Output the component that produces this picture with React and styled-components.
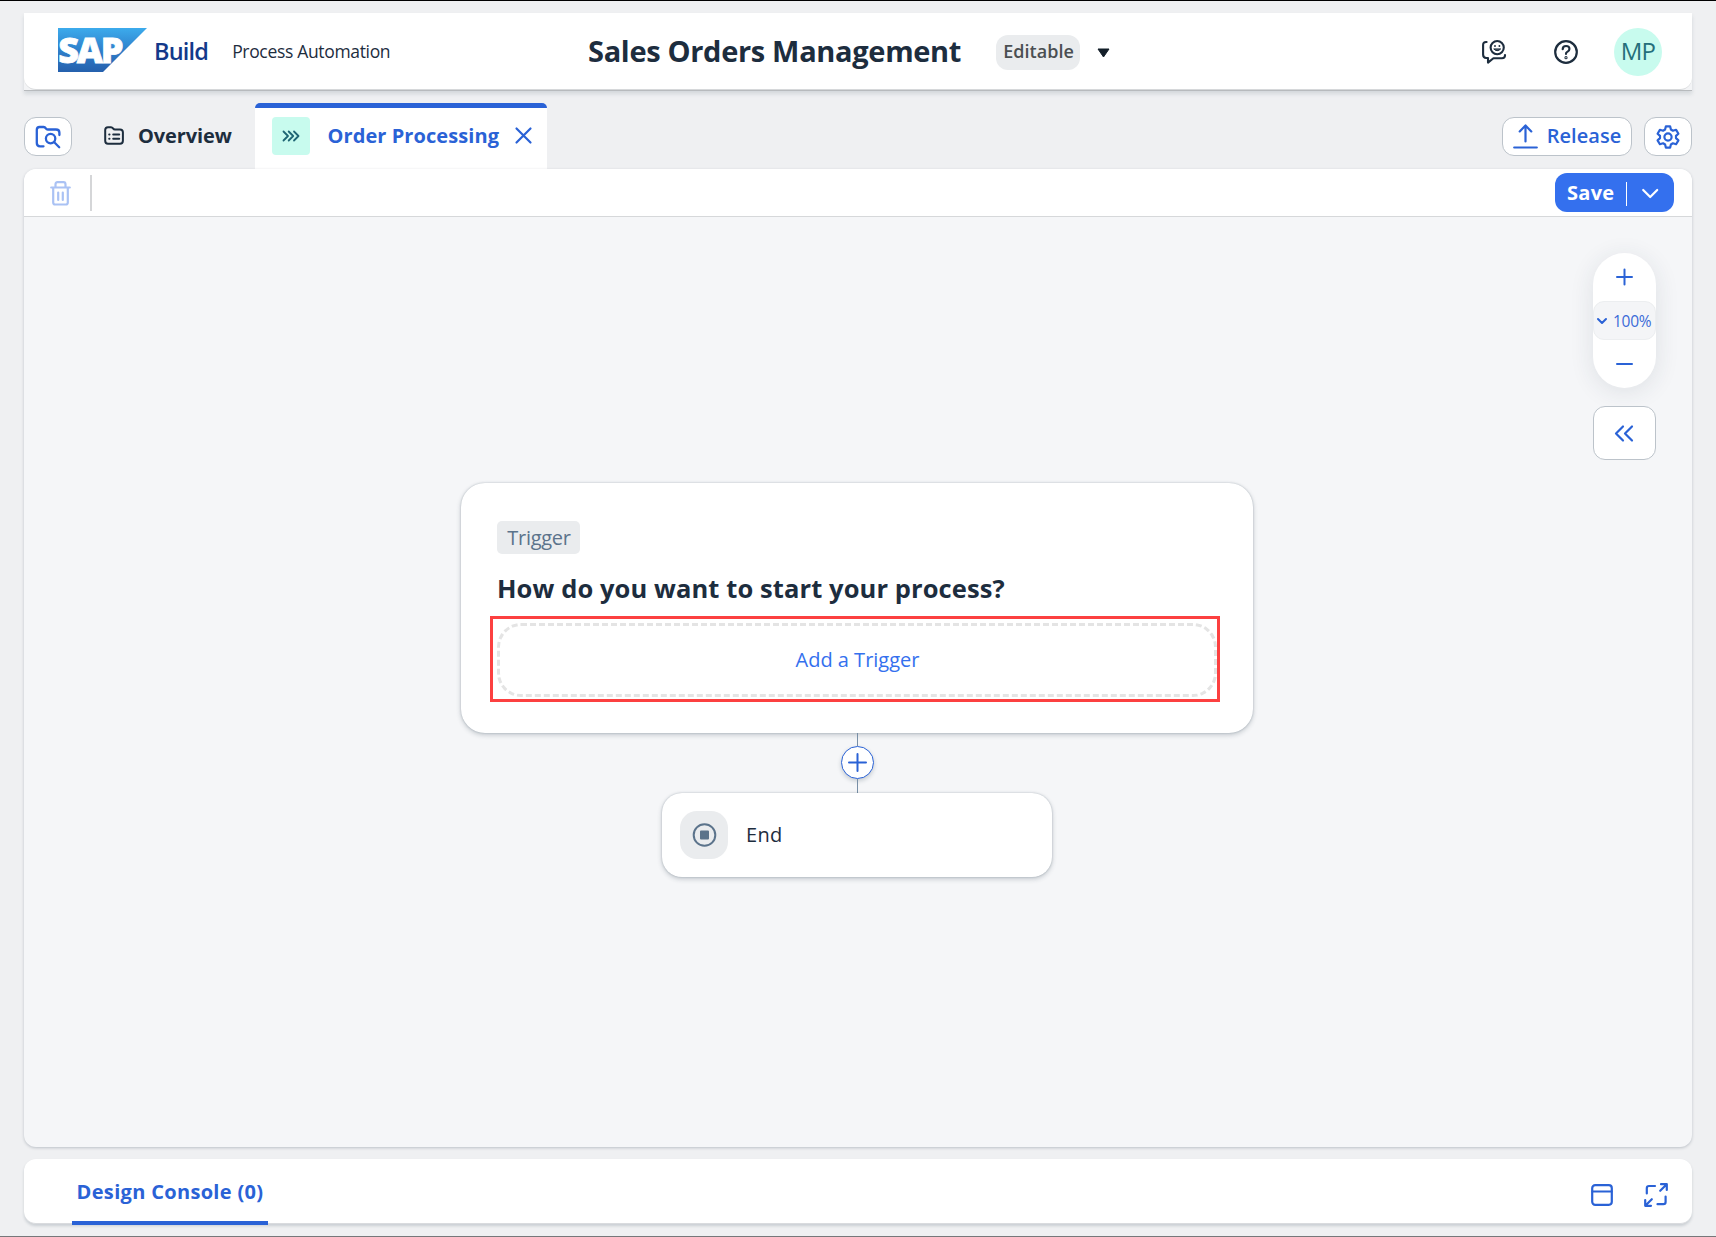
import React from "react";
import styled, { createGlobalStyle } from "styled-components";

const blue = "#2a62d6";
const ink = "#1d2d3e";

const Global = createGlobalStyle`
  * { box-sizing: border-box; }
  html, body { margin: 0; padding: 0; }
  body { background: #eff0f2; font-family: "Open Sans", "Noto Sans", sans-serif; color: ${ink}; }
  button { font: inherit; color: inherit; border: 0; background: none; padding: 0; margin: 0; }
  h1 { margin: 0; }
  svg { display: block; flex: none; overflow: visible; }
`;

const Page = styled.div`
  width: 1716px;
  height: 1237px;
  padding: 12px 24px 0;
  display: flex;
  flex-direction: column;
  border-top: 1px solid #000;
  border-bottom: 1px solid #76777a;
  overflow: hidden;
`;

const Label = styled.span`
  font-size: ${(p) => p.$size || 20}px;
  font-weight: ${(p) => p.$weight || 400};
  letter-spacing: ${(p) => p.$track || 0}px;
  color: ${(p) => p.$color || "inherit"};
  line-height: 24px;
  white-space: nowrap;
`;

const HeaderFrame = styled.header`
  flex: none;
  height: 78px;
  background: #f3f4f6;
  border-bottom: 1px solid #b7babd;
  box-shadow: 0 3px 4px rgba(34, 53, 72, 0.13);
`;
const Header = styled.div`
  height: 77px;
  background: #fff;
  border-radius: 0 0 12px 12px;
  border-bottom: 1px solid #d6d8da;
  display: grid;
  grid-template-columns: 564px 1fr auto;
  align-items: center;
`;
const Brand = styled.div`
  display: flex;
  align-items: center;
  padding: 0 0 3px 34px;
`;
const Product = styled(Label)`
  margin: 2px 0 0 6px;
`;
const Suite = styled(Label)`
  margin: 2px 0 0 24px;
`;
const ProjectName = styled.div`
  display: flex;
  align-items: center;
  padding-bottom: 1px;
`;
const Badge = styled.span`
  height: 35px;
  width: 84px;
  margin: 3px 18px 0 35px;
  padding: 0 0 3px 1px;
  border-radius: 12px;
  background: #eaecee;
  display: flex;
  align-items: center;
  justify-content: center;
`;
const BadgeArrow = styled.svg`
  margin: 4px 0 0 -1px;
`;
const HeaderTools = styled.div`
  display: flex;
  align-items: center;
  padding: 2px 30px 0 0;
`;
const HeaderButton = styled.button`
  margin-right: ${(p) => p.$gap}px;
`;
const Avatar = styled.span`
  width: 48px;
  height: 48px;
  border-radius: 50%;
  background: #c8fbee;
  display: flex;
  align-items: center;
  justify-content: center;
  padding-bottom: 2px;
`;

const TabRow = styled.nav`
  flex: none;
  height: 78px;
  padding-top: 12px;
  display: flex;
  align-items: stretch;
`;
const OutlineButton = styled.button`
  width: ${(p) => p.$width}px;
  height: 39px;
  margin: 14px ${(p) => p.$gap || 0}px 0 0;
  border: 1px solid #bcc3ca;
  border-radius: 12px;
  background: #fff;
  color: ${blue};
  display: flex;
  align-items: center;
  justify-content: center;
`;
const Tab = styled.div`
  width: ${(p) => p.$width}px;
  display: flex;
  align-items: center;
  padding: 0 0 6px ${(p) => (p.$active ? 17 : 32)}px;
  border-top: 5px solid ${(p) => (p.$active ? blue : "transparent")};
  border-radius: 5px 5px 0 0;
  background: ${(p) => (p.$active ? "#fff" : "transparent")};
  color: ${(p) => (p.$active ? blue : ink)};
`;
const TabText = styled(Label)`
  margin: 0 ${(p) => p.$right || 0}px 0 ${(p) => p.$left}px;
`;
const TabTile = styled.span`
  width: 38px;
  height: 38px;
  border-radius: 4px;
  background: #c8fbee;
  display: flex;
  align-items: center;
  justify-content: center;
`;
const ButtonText = styled(Label)`
  margin: 0 0 1px 9px;
`;
const Spacer = styled.span`
  flex: 1;
`;

const Panel = styled.main`
  flex: none;
  height: 978px;
  border-radius: 12px;
  background: #f5f6f8;
  box-shadow: 0 1px 3px rgba(34, 53, 72, 0.25);
  position: relative;
  display: flex;
  flex-direction: column;
`;
const Toolbar = styled.div`
  flex: none;
  height: 48px;
  border-radius: 12px 12px 0 0;
  background: #fff;
  border-bottom: 1px solid #d6d8da;
  padding: 1px 18px 0 26px;
  display: flex;
  align-items: center;
`;
const Divider = styled.span`
  width: 2px;
  height: 36px;
  margin-left: 19px;
  background: #d5d6d8;
`;
const SaveButton = styled.button`
  width: 119px;
  height: 39px;
  margin-bottom: 1px;
  border-radius: 12px;
  background: #3470ee;
  color: #fff;
  display: flex;
  align-items: center;
  padding: 1px 0 0 11px;
`;
const SaveRule = styled.span`
  width: 1px;
  height: 24px;
  margin: 1px 15px 0 11px;
  background: #fff;
`;
const SaveText = styled(Label)`
  padding-left: 1px;
  width: 49px;
  text-align: left;
`;

const Flow = styled.section`
  flex: 1;
  padding: 266px 2px 0 0;
  display: flex;
  flex-direction: column;
  align-items: center;
`;
const nodeShadow = "0 0 2px rgba(34,53,72,.28), 0 2px 5px rgba(34,53,72,.24)";
const TriggerCard = styled.article`
  width: 792px;
  height: 250px;
  border-radius: 24px;
  background: #fff;
  box-shadow: ${nodeShadow};
  padding: 38px 36px 0 36px;
  display: flex;
  flex-direction: column;
`;
const Chip = styled.span`
  width: 83px;
  height: 33px;
  border-radius: 5px;
  background: #eaecee;
  display: flex;
  align-items: center;
  justify-content: center;
  padding-left: 1px;
`;
const Question = styled.h2`
  margin: 16px 0 0;
  font-size: 25.5px;
  font-weight: 700;
  letter-spacing: 0.1px;
  line-height: 36px;
  height: 53px;
  white-space: nowrap;
`;
const DropZone = styled.div`
  position: relative;
  width: 720px;
  height: 74px;
  border: 3px dashed #e4e4e4;
  border-radius: 24px;
  display: flex;
  align-items: center;
  justify-content: center;
  padding: 0 0 1px 1px;
`;
const Highlight = styled.div`
  position: absolute;
  top: -10px;
  left: -10px;
  width: 730px;
  height: 86px;
  border: 3px solid #fc4040;
`;
const Connector = styled.div`
  height: 60px;
  display: flex;
  flex-direction: column;
  align-items: center;
`;
const Wire = styled.span`
  width: 1px;
  height: ${(p) => p.$length}px;
  background: #788fa6;
`;
const AddStep = styled.button`
  width: 33px;
  height: 33px;
  border: 1px solid ${blue};
  border-radius: 50%;
  background: #fff;
  box-shadow: 0 2px 4px rgba(34, 53, 72, 0.22);
  display: flex;
  align-items: center;
  justify-content: center;
`;
const EndCard = styled.article`
  width: 390px;
  height: 84px;
  border-radius: 20px;
  background: #fff;
  box-shadow: ${nodeShadow};
  padding: 0 18px;
  display: flex;
  align-items: center;
  gap: 18px;
`;
const EndTile = styled.span`
  width: 48px;
  height: 48px;
  border-radius: 17px;
  background: #eaecee;
  display: flex;
  align-items: center;
  justify-content: center;
`;

const CanvasTools = styled.aside`
  position: absolute;
  top: 84px;
  right: 36px;
  width: 63px;
  display: flex;
  flex-direction: column;
  gap: 18px;
`;
const ZoomPill = styled.div`
  height: 135px;
  border-radius: 32px;
  background: #fff;
  box-shadow: 0 4px 24px rgba(34, 53, 72, 0.11);
  display: grid;
  grid-template-rows: 48px 39px 48px;
`;
const ZoomStep = styled.button`
  display: flex;
  align-items: center;
  justify-content: center;
`;
const ZoomLevel = styled.button`
  border-radius: 11px;
  border: 1px solid #eceef0;
  background: #f4f5f7;
  display: flex;
  align-items: center;
  padding: 0 0 0 2px;
  gap: 5px;
`;
const CollapseButton = styled.button`
  height: 54px;
  border: 1px solid #bcc3ca;
  border-radius: 12px;
  background: #fff;
  display: flex;
  align-items: center;
  justify-content: center;
  padding-right: 1px;
`;

const Console = styled.footer`
  flex: none;
  height: 65px;
  margin-top: 12px;
  border-radius: 12px;
  background: #fff;
  border-bottom: 1px solid #d9dbde;
  box-shadow: 0 2px 3px rgba(34, 53, 72, 0.18);
  padding: 0 24px 0 48px;
  display: flex;
  align-items: center;
`;
const ConsoleTab = styled.div`
  width: 196px;
  height: 66px;
  margin-bottom: -2px;
  border-bottom: 4px solid ${blue};
  display: flex;
  justify-content: center;
  padding-top: 21px;
`;
const ConsoleTools = styled.div`
  margin-left: auto;
  display: flex;
  align-items: center;
  gap: 31px;
  padding-top: 7px;
`;

const Icon = ({ w, h = w, sw = 2, color = "currentColor", children }) => (
  <svg width={w} height={h} viewBox={`0 0 ${w} ${h}`} fill="none" stroke={color} strokeWidth={sw} strokeLinecap="round" strokeLinejoin="round">
    {children}
  </svg>
);

const SapLogo = () => (
  <svg width="90" height="44" viewBox="0 0 90 44">
    <defs>
      <linearGradient id="sap" x1="0" y1="0" x2="0" y2="1">
        <stop offset="0" stopColor="#3cabec" />
        <stop offset="0.5" stopColor="#2f80cb" />
        <stop offset="1" stopColor="#2560ad" />
      </linearGradient>
    </defs>
    <path d="M0 0h89L45 44H0z" fill="url(#sap)" />
    <text x="0.3" y="34.8" fontFamily="Open Sans, sans-serif" fontSize="36" fontWeight="800" letterSpacing="-2.2" fill="#fff" stroke="#fff" strokeWidth="0.8">SAP</text>
  </svg>
);

export default function App() {
  return (
    <Page>
      <Global />
      <HeaderFrame>
        <Header>
          <Brand>
            <SapLogo />
            <Product $size={23.5} $weight={600} $track={-0.8} $color="#13398a">Build</Product>
            <Suite $size={17.5} $track={-0.33}>Process Automation</Suite>
          </Brand>
          <ProjectName>
            <Label as="h1" $size={29} $weight={700} $track={-0.32}>Sales Orders Management</Label>
            <Badge><Label $size={18} $weight={600} $track={0.05} $color="#4b4f52">Editable</Label></Badge>
            <BadgeArrow width="13" height="10" viewBox="0 0 13 10"><path d="M1 1h11L6.500 9z" fill="#131e29" stroke="#131e29" strokeLinejoin="round" /></BadgeArrow>
          </ProjectName>
          <HeaderTools>
            <HeaderButton $gap={48}>
              <Icon w={24} sw={2.1} color={ink}>
                <path d="M4.6 2H4Q1.1 2 1.1 5v9.6Q1.1 18 4.2 18H6v4.6l5.4-4.4H20q3 0 3-2.6V15" />
                <circle cx="15.2" cy="7.6" r="6.6" />
                <path d="M12 9.2q3.2 3.2 6.4 0z" fill={ink} strokeWidth="1" />
                <path d="M13 5.9v.2M17.4 5.9v.2" strokeWidth="1.9" />
              </Icon>
            </HeaderButton>
            <HeaderButton $gap={36}>
              <Icon w={24} sw={2.2} color={ink}>
                <circle cx="12" cy="12" r="10.8" />
                <path d="M8.700 9.200q0-3.200 3.400-3.200t3.300 3q0 1.600-1.800 2.600T12 13.900" />
                <circle cx="12" cy="17.700" r="0.500" />
              </Icon>
            </HeaderButton>
            <Avatar><Label $size={24} $track={-0.8} $color="#256f7b">MP</Label></Avatar>
          </HeaderTools>
        </Header>
      </HeaderFrame>

      <TabRow>
        <OutlineButton $width={48}>
          <Icon w={26} h={24} sw={2.3}>
            <path d="M8.5 21.3H5Q1.8 21.3 1.8 18V4.8Q1.8 2 4.6 2h4q1.4 0 2.2 1.3T13 4.5h8q3.4 0 3.4 3.3V10" />
            <circle cx="15.6" cy="13.6" r="4.7" />
            <path d="M19 17l5.2 5.2" />
          </Icon>
        </OutlineButton>
        <Tab $width={183}>
          <Icon w={20} h={19} sw={2}>
            <path d="M1.2 14.8V4Q1.2 1.2 4 1.2h3Q8.200 1.200 9 2.300T11 3.400h5q2.900 0 2.900 2.800v8.600q0 2.900-2.900 2.900H4Q1.200 17.700 1.200 14.800z" />
            <path d="M9.200 8.400h6M9.200 12.800h6M5.200 8.400h.3M5.200 12.800h.3" />
          </Icon>
          <TabText $left={14} $weight={700} $track={-0.1}>Overview</TabText>
        </Tab>
        <Tab $width={292} $active>
          <TabTile>
            <Icon w={18} h={12} sw={1.8} color="#1f6674">
              <path d="M1.500 1.500L6 6l-4.500 4.500M6.700 1.500L11.200 6l-4.500 4.500M12 1.500L16.500 6 12 10.500" />
            </Icon>
          </TabTile>
          <TabText $left={17.5} $right={15.5} $weight={700} $track={0.08}>Order Processing</TabText>
          <Icon w={17} sw={2.2}><path d="M1.500 1.500l14 14M15.500 1.500l-14 14" /></Icon>
        </Tab>
        <Spacer />
        <OutlineButton $width={130} $gap={12}>
          <Icon w={25} h={25} sw={2.2}><path d="M1.200 23.500h22.600M12.500 17.500V1.500M6.700 7.400l5.800-6 5.800 6" /></Icon>
          <ButtonText $weight={600} $track={0.05}>Release</ButtonText>
        </OutlineButton>
        <OutlineButton $width={48}>
          <Icon w={24} h={24} sw={2.2}>
            <path d="M9.900 1.300h4.200l.8 3.200 2 1.200 3.200-.9 2.300 3.900-2.400 2.200v2.200l2.400 2.300-2.300 3.800-3.200-.9-2 1.200-.8 3.200H9.900l-.8-3.200-2-1.200-3.200.9-2.300-3.800L4 13.100v-2.200L1.600 8.700l2.300-3.900 3.200.9 2-1.200z" />
            <circle cx="12" cy="12" r="3.600" />
          </Icon>
        </OutlineButton>
      </TabRow>

      <Panel>
        <Toolbar>
          <Icon w={21} h={25} sw={2.2} color="#aac2f4">
            <path d="M1.200 6.500h18.600M5.500 6V3.500Q5.500 1.200 7.500 1.200h6q2 0 2 2.300V6M3.200 7v14.500q0 2 2 2h10.600q2 0 2-2V7M8.200 11.500v7.500M12.800 11.500v7.500" />
          </Icon>
          <Divider />
          <Spacer />
          <SaveButton>
            <SaveText $weight={700} $track={0.3}>Save</SaveText>
            <SaveRule />
            <Icon w={17} h={11} sw={2.200}><path d="M1.200 2l7 7 7-7" /></Icon>
          </SaveButton>
        </Toolbar>

        <Flow>
          <TriggerCard>
            <Chip><Label $track={-0.3} $color="#5b738b">Trigger</Label></Chip>
            <Question>How do you want to start your process?</Question>
            <DropZone>
              <Label $color="#3470ee">Add a Trigger</Label>
              <Highlight />
            </DropZone>
          </TriggerCard>
          <Connector>
            <Wire $length={13} />
            <AddStep><Icon w={19} color={blue}><path d="M9.500 1v17M1 9.500h17" /></Icon></AddStep>
            <Wire $length={14} />
          </Connector>
          <EndCard>
            <EndTile>
              <Icon w={25} h={24} color="#5b738b">
                <circle cx="12.500" cy="12" r="10.800" />
                <rect x="9" y="8.500" width="7" height="7" fill="#5b738b" />
              </Icon>
            </EndTile>
            <Label $track={0.3}>End</Label>
          </EndCard>
        </Flow>

        <CanvasTools>
          <ZoomPill>
            <ZoomStep><Icon w={17} color={blue}><path d="M8.500 0.500v15M1 8h15" /></Icon></ZoomStep>
            <ZoomLevel>
              <Icon w={12} h={8} color={blue}><path d="M2 2l4 4 4-4" /></Icon>
              <Label $size={15.5} $track={-0.3} $color="#3a6bd8">100%</Label>
            </ZoomLevel>
            <ZoomStep><Icon w={17} color={blue}><path d="M1 8h15" /></Icon></ZoomStep>
          </ZoomPill>
          <CollapseButton>
            <Icon w={20} h={17} sw={2.200} color={blue}><path d="M9 1.500L2 8.500l7 7M18 1.500l-7 7 7 7" /></Icon>
          </CollapseButton>
        </CanvasTools>
      </Panel>

      <Console>
        <ConsoleTab><Label $weight={700} $track={0.32} $color={blue}>Design Console (0)</Label></ConsoleTab>
        <ConsoleTools>
          <Icon w={22} color={blue} sw={2.200}>
            <rect x="1.200" y="1.200" width="19.600" height="19.600" rx="3" />
            <path d="M1.500 7.500h19" />
          </Icon>
          <Icon w={24} color={blue} sw={2.200}>
            <path d="M11 3H5Q2.800 3 2.800 5.200V10.500M21.600 13.500v5.500q0 2.200-2.200 2.200H13.500M17 1.200h5.800V7M22.500 1.500l-6.300 6.300M7 22.800H1.200V17M1.500 22.500l6.300-6.300" />
          </Icon>
        </ConsoleTools>
      </Console>
    </Page>
  );
}
